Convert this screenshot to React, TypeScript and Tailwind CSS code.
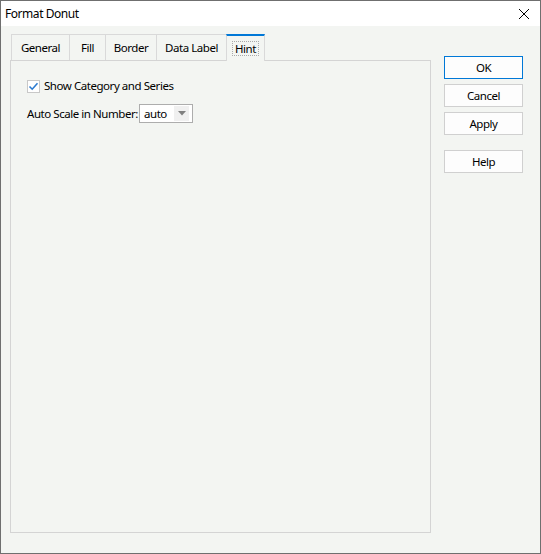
import React from 'react'

const tabs = ['General', 'Fill', 'Border', 'Data Label', 'Hint']
const tabWidths: Record<string, string> = {
  General: 'w-[58px]',
  Fill: 'w-[36px]',
  Border: 'w-[51px]',
  'Data Label': 'w-[70px]',
  Hint: 'w-[39px]',
}

function DialogButton({ label, primary }: { label: string; primary?: boolean }) {
  return (
    <button
      className={`w-[79px] h-[23px] bg-[#fdfdfd] text-black border ${primary ? 'border-[#0078d7]' : 'border-[#d0d0d0]'}`}
    >
      {label}
    </button>
  )
}

export default function App() {
  return (
    <div
      className="w-[541px] h-[554px] border border-[#6f6f6f] flex flex-col bg-[#f3f5f2] text-[11.5px] tracking-[-0.45px] leading-[16px] text-black whitespace-nowrap"
      style={{ fontFamily: '"Noto Sans", "Open Sans", sans-serif' }}
    >
      {/* title bar */}
      <div className="h-[25px] bg-white flex items-center justify-between pl-[4px] pr-[10px] shrink-0">
        <span className="text-[12px]">Format Donut</span>
        <svg width="12" height="12" viewBox="0 0 12 12" className="mt-[1px]">
          <path d="M1 1 L11 11 M11 1 L1 11" stroke="#000" strokeWidth="1" fill="none" />
        </svg>
      </div>

      <div className="flex flex-1 pt-[8px] pl-[9px] pb-[20px]">
        {/* tabs + panel */}
        <div className="flex flex-col w-[421px]">
          <div className="flex h-[26px] pl-[1px] items-end">
            {tabs.map(t =>
              t === 'Hint' ? (
                <div
                  key={t}
                  className={`${tabWidths[t]} h-[27px] -mb-[1px] bg-[#f3f5f2] border-t-2 border-t-[#0078d7] border-x border-x-[#d9d9d9] flex items-center justify-center relative z-10`}
                >
                  <span className="px-[2px] leading-[13px] border border-dotted border-[#aaa]">{t}</span>
                </div>
              ) : (
                <div
                  key={t}
                  className={`${tabWidths[t]} h-[26px] border-t border-l border-[#d9d9d9] last:border-r flex items-center justify-center pt-[1px]`}
                >
                  {t}
                </div>
              )
            )}
          </div>
          <div className="flex-1 border border-[#d4d4d4] pt-[17px] pl-[16px]">
            <label className="flex items-center gap-[4px]">
              <span className="w-[13px] h-[13px] border border-[#c8c8c8] bg-white flex items-center justify-center">
                <svg width="11" height="11" viewBox="0 0 11 11">
                  <path d="M1.5 5.5 L4.2 8.2 L9.5 2.2" stroke="#2b7ad0" strokeWidth="1.6" fill="none" />
                </svg>
              </span>
              <span>Show Category and Series</span>
            </label>
            <div className="flex items-center mt-[10px]">
              <span className="w-[112px]">Auto Scale in Number:</span>
              <div className="w-[54px] h-[19px] border border-[#adadad] bg-white flex items-center justify-between pl-[4px] pr-[3px]">
                <span>auto</span>
                <span className="w-[15px] h-[15px] bg-[#f0f0f0] flex items-center justify-center">
                  <svg width="8" height="5" viewBox="0 0 8 5">
                    <path d="M0 0 L8 0 L4 4.5 Z" fill="#808080" />
                  </svg>
                </span>
              </div>
            </div>
          </div>
        </div>

        {/* buttons */}
        <div className="flex flex-col ml-[13px] pt-[22px] gap-[5px]">
          <DialogButton label="OK" primary />
          <DialogButton label="Cancel" />
          <DialogButton label="Apply" />
          <div className="h-[5px]" />
          <DialogButton label="Help" />
        </div>
      </div>
    </div>
  )
}
